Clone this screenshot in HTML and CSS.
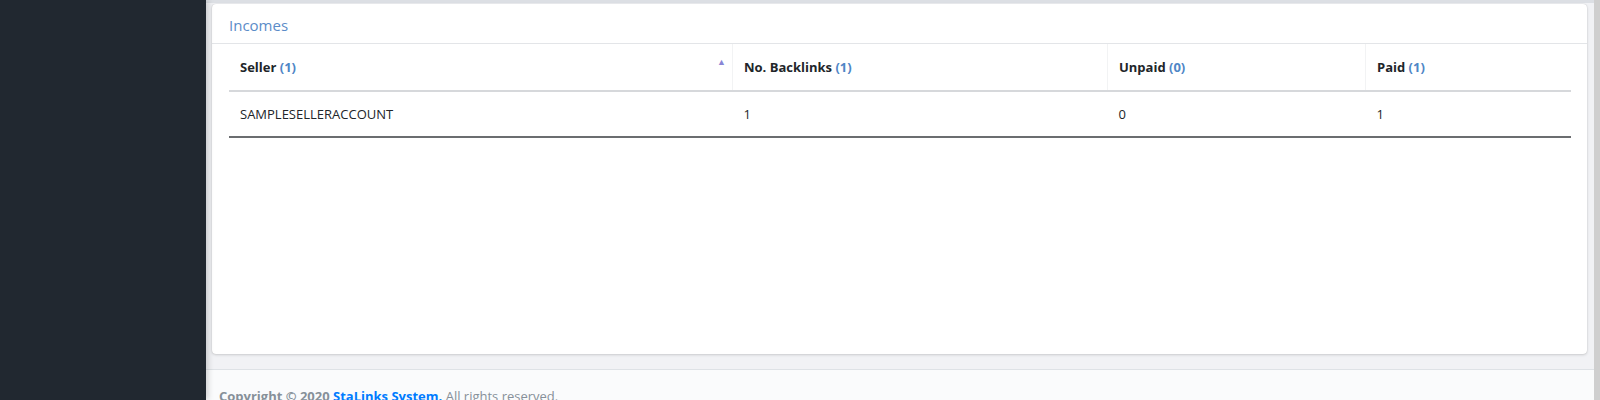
FILE: index.html
```html
<!DOCTYPE html>
<html>
<head>
<meta charset="utf-8">
<link rel="stylesheet" href="styles.css">
</head>
<body>
<div class="app">
  <aside class="sidebar"></aside>
  <div class="main">
    <div class="content">
      <section class="card">
        <header class="card-header">Incomes</header>
        <div class="card-body">
          <table class="data">
            <thead>
              <tr>
                <th class="c1 sorted">Seller <span class="cnt">(1)</span><span class="sort">&#9650;</span></th>
                <th class="c2">No. Backlinks <span class="cnt">(1)</span></th>
                <th class="c3">Unpaid <span class="cnt">(0)</span></th>
                <th class="c4">Paid <span class="cnt">(1)</span></th>
              </tr>
            </thead>
            <tbody>
              <tr>
                <td>SAMPLESELLERACCOUNT</td>
                <td>1</td>
                <td>0</td>
                <td>1</td>
              </tr>
            </tbody>
          </table>
        </div>
      </section>
    </div>
    <footer class="footer">
      <strong>Copyright &copy; 2020 <a class="brand">StaLinks System.</a></strong> All rights reserved.
    </footer>
  </div>
  <div class="scrollbar"></div>
</div>
</body>
</html>
```

FILE: styles.css
```css
html, body {
  margin: 0;
  padding: 0;
  height: 400px;
  overflow: hidden;
}
body {
  font-family: "Open Sans", "Noto Sans", sans-serif;
  font-size: 13px;
  color: #212529;
  background: #f4f6f9;
}
.app {
  display: flex;
  height: 400px;
}
.sidebar {
  width: 206px;
  flex: none;
  background: #212830;
  box-shadow: 2px 0 6px rgba(0,0,0,0.18);
  position: relative;
  z-index: 2;
}
.main {
  flex: 1;
  display: flex;
  flex-direction: column;
  background: #f1f2f5;
  border-top: 3px solid #dcdfe4;
  min-width: 0;
}
.content {
  padding: 1px 7px 0 6px;
}
.card {
  background: #fff;
  border-radius: 4px;
  box-shadow: 0 0 1px rgba(0,0,0,0.2), 0 1px 3px rgba(0,0,0,0.15);
  height: 350px;
  display: flex;
  flex-direction: column;
}
.card-header {
  height: 39px;
  border-bottom: 1px solid #e3e5e8;
  padding: 0 17px;
  font-size: 15px;
  line-height: 42px;
  color: #5b8cc8;
}
.card-body {
  padding: 0 16px 0 17px;
}
.data {
  width: 100%;
  border-collapse: collapse;
  table-layout: fixed;
}
.data th {
  text-align: left;
  font-weight: 700;
  height: 46px;
  padding: 0 11px;
  border-bottom: 2px solid #d6d8db;
  border-right: 1px solid #f2f3f4;
  box-shadow: 0 1px 2px rgba(0,0,0,0.06);
  position: relative;
}
.data th:last-child { border-right: 0; }
.data th.c1 { width: 481px; }
.data th.c2 { width: 352px; }
.data th.c3 { width: 235px; }
.cnt {
  color: #4f86c6;
}
.sort {
  position: absolute;
  right: 6px;
  top: 13px;
  font-size: 9px;
  line-height: 9px;
  color: #8a86d6;
}
.data td {
  height: 44px;
  padding: 0 11px;
  border-bottom: 2px solid #6b6d70;
}
.footer {
  margin-top: 15px;
  border-top: 1px solid #dee2e6;
  background: #fafbfc;
  flex: 1;
  padding: 16px 13px 0;
  color: #869099;
  font-size: 13px;
  line-height: 20px;
  white-space: nowrap;
}
.footer strong { font-weight: 700; color: #869099; }
.brand { color: #007bff; text-decoration: none; }
.scrollbar {
  width: 6px;
  flex: none;
  background: #cfcfcf;
}
```
